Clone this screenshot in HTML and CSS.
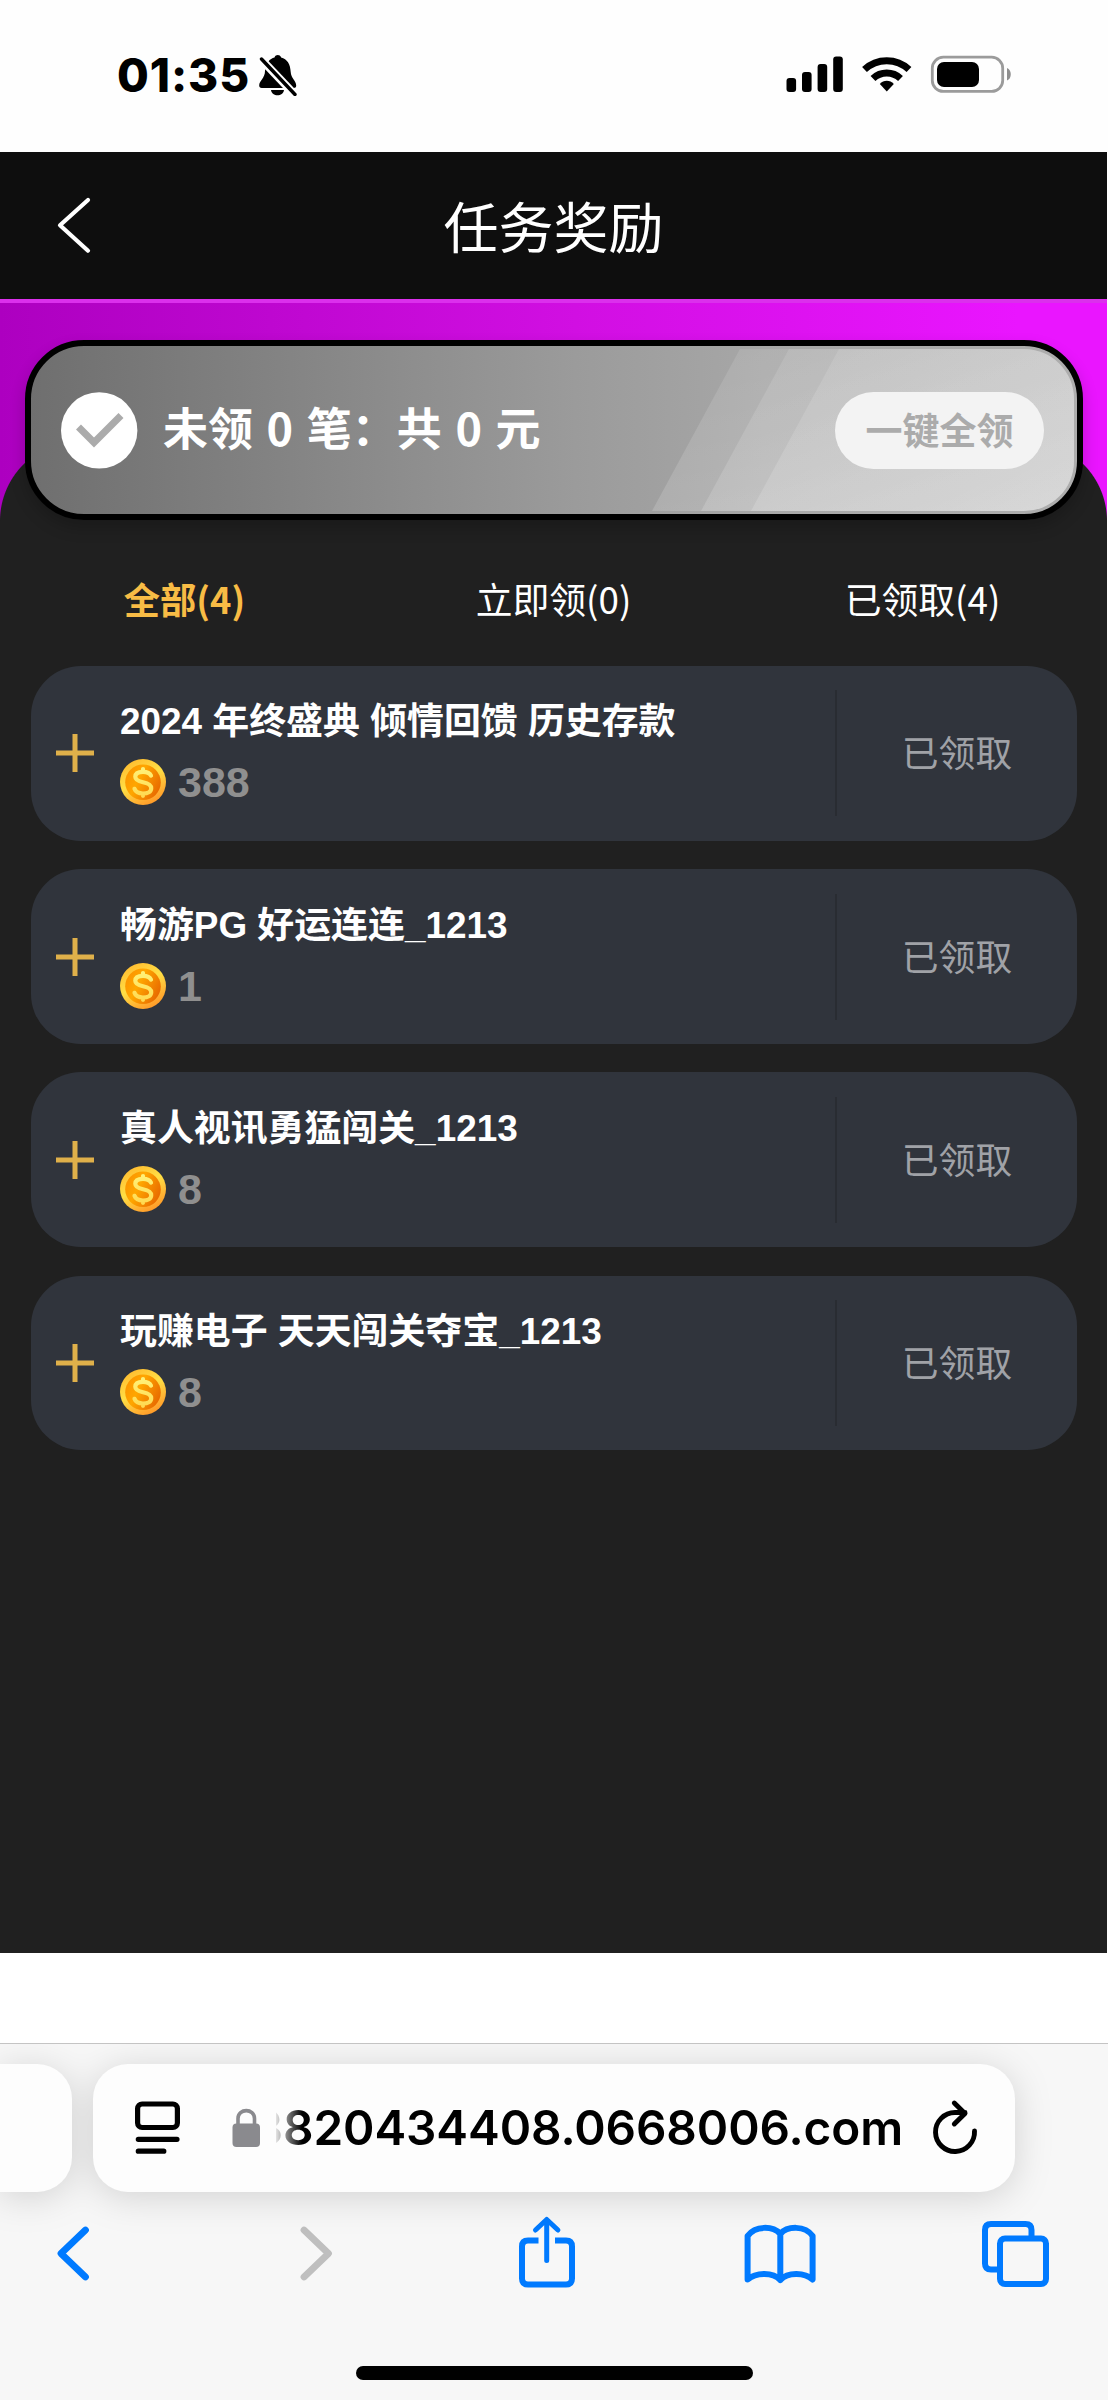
FILE: index.html
```html
<!DOCTYPE html>
<html lang="zh-CN">
<head>
<meta charset="utf-8">
<title>任务奖励</title>
<link rel="stylesheet" href="styles.css">
</head>
<body>
<svg class="defs" width="0" height="0" aria-hidden="true">
  <defs>
    <linearGradient id="rim" x1="0.2" y1="0" x2="0.75" y2="1"><stop offset="0" stop-color="#ffb92e"/><stop offset=".45" stop-color="#ffdf45"/><stop offset="1" stop-color="#ff9426"/></linearGradient>
    <linearGradient id="face" x1="0" y1="0.3" x2="1" y2="0.8"><stop offset="0" stop-color="#fb9500"/><stop offset=".35" stop-color="#ffa600"/><stop offset="1" stop-color="#e56300"/></linearGradient>
    <linearGradient id="sign" gradientUnits="userSpaceOnUse" x1="0" y1="8" x2="0" y2="39"><stop offset="0" stop-color="#fff27a"/><stop offset="1" stop-color="#ffd84f"/></linearGradient>
    <symbol id="coin" viewBox="0 0 46 46">
      <circle cx="23" cy="23" r="23" fill="url(#rim)"/>
      <circle cx="23" cy="23.3" r="17.8" fill="url(#face)"/>
      <path d="M31 16.6C29.6 13.6 26.8 12.8 23 12.8c-4.600 0-7.700 1.700-7.700 5 0 3.600 3.500 4.600 7.700 5.400 4.600.9 8.200 2.100 8.200 6 0 3.500-3.400 5.300-8.200 5.300-4.400 0-7.400-1.500-8.500-4.700M23 10v2M23 35v1.800" fill="none" stroke="url(#sign)" stroke-width="4.200" stroke-linecap="round"/>
    </symbol>
    <symbol id="plus" viewBox="0 0 40 40"><path d="M20 1v38M1 20h38" stroke="#dfb04a" stroke-width="5"/></symbol>
  </defs>
</svg>

<header class="status">
  <span class="clock">01:35</span>
  <svg class="bell" width="40" height="42" viewBox="258 54 40 42">
    <path d="M265 71C265.500 63 270 58.500 274.500 57.500c1.200-3.200 5.400-3.200 6.600 0 6 1.500 9.300 6.500 9.600 14.500.2 6 5.500 9 5.500 13.500 0 1.800-1 2.500-2.500 2.500h-32c-1.700 0-2.500-1-2.500-2.500 0-4.500 5.800-7.500 5.800-14.500z"/>
    <path d="M271 90h13c-.8 7-12.200 7-13 0z"/>
    <path d="M260.500 58.500l36 38" stroke="#fff" stroke-width="8"/>
    <path d="M261.500 59l33.500 35.500" stroke="#000" stroke-width="3.400" stroke-linecap="round"/>
  </svg>
  <svg class="signal" width="57" height="36" viewBox="786 56 57 36">
    <rect x="786.500" y="78" width="9.600" height="14" rx="3"/><rect x="802" y="72" width="9.600" height="20" rx="3"/><rect x="817.600" y="64" width="9.600" height="28" rx="3"/><rect x="833.200" y="56.500" width="9.600" height="35.500" rx="3"/>
  </svg>
  <svg class="wifi" width="50" height="37" viewBox="862 55 50 37">
    <g fill="none" stroke="#000" stroke-width="7"><path d="M864.500 69.500a32.500 32.500 0 0 1 44.500 0"/><path d="M873 78.500a20 20 0 0 1 27.500 0"/></g>
    <path d="M886.800 91.500l-7-7.400c3.800-4.400 10.200-4.400 14 0z"/>
  </svg>
  <svg class="battery" width="82" height="38" viewBox="930 55 82 38">
    <rect x="932.300" y="57.200" width="70.400" height="34.200" rx="11" fill="none" stroke="#9b9b9b" stroke-width="2.800"/>
    <rect x="937" y="62" width="42" height="25" rx="7"/>
    <path d="M1007 68c5 1.500 5 11 0 12.500z" fill="#8e8e8e"/>
  </svg>
</header>

<main class="app">
  <nav class="topbar">
    <svg width="36" height="58" viewBox="56 196 36 58"><path d="M88 200L60 225.200l28 25.500" fill="none" stroke="#fff" stroke-width="4.200" stroke-linecap="round" stroke-linejoin="round"/></svg>
    <h1 class="title">任务奖励</h1>
  </nav>

  <div class="hero">
    <section class="summary">
      <svg class="shine" viewBox="0 0 426 162" aria-hidden="true">
        <defs><linearGradient id="sh" x1="0" y1="0" x2="1" y2="1"><stop offset="0" stop-color="#fff" stop-opacity=".09"/><stop offset="1" stop-color="#fff" stop-opacity=".22"/></linearGradient></defs>
        <g fill="url(#sh)"><path d="M88 0H372a50 50 0 0 1 50 50v62a50 50 0 0 1-50 50H0z"/><path d="M137 0H372a50 50 0 0 1 50 50v62a50 50 0 0 1-50 50H49z"/><path d="M187 0H372a50 50 0 0 1 50 50v62a50 50 0 0 1-50 50H99z"/></g>
      </svg>
      <svg class="check" width="77" height="77" viewBox="61 392 77 77"><circle cx="99.200" cy="430.400" r="38.200" fill="#fff"/><path d="M78.500 427L94 442.500l27-27" fill="none" stroke="#ababab" stroke-width="7"/></svg>
      <span class="summary-text">未领 0 笔：共 0 元</span>
      <button class="claim-all">一键全领</button>
    </section>
  </div>

  <div class="panel">
    <div class="tabs">
      <span class="tab active">全部(4)</span><span class="tab">立即领(0)</span><span class="tab">已领取(4)</span>
    </div>
    <ul class="rewards">
      <li class="reward">
        <svg class="plus" width="40" height="40"><use href="#plus"/></svg>
        <div class="info"><h2>2024 年终盛典 倾情回馈 历史存款</h2><p><svg width="46" height="46"><use href="#coin"/></svg>388</p></div>
        <span class="state">已领取</span>
      </li>
      <li class="reward">
        <svg class="plus" width="40" height="40"><use href="#plus"/></svg>
        <div class="info"><h2>畅游PG 好运连连_1213</h2><p><svg width="46" height="46"><use href="#coin"/></svg>1</p></div>
        <span class="state">已领取</span>
      </li>
      <li class="reward">
        <svg class="plus" width="40" height="40"><use href="#plus"/></svg>
        <div class="info"><h2>真人视讯勇猛闯关_1213</h2><p><svg width="46" height="46"><use href="#coin"/></svg>8</p></div>
        <span class="state">已领取</span>
      </li>
      <li class="reward">
        <svg class="plus" width="40" height="40"><use href="#plus"/></svg>
        <div class="info"><h2>玩赚电子 天天闯关夺宝_1213</h2><p><svg width="46" height="46"><use href="#coin"/></svg>8</p></div>
        <span class="state">已领取</span>
      </li>
    </ul>
  </div>
</main>

<footer class="browser">
  <div class="address-row">
    <div class="prev-tab"></div>
    <div class="address">
      <svg class="reader" width="46" height="56" viewBox="135 2100 46 56"><g fill="none" stroke="#000" stroke-width="5.200" stroke-linecap="round"><rect x="137.600" y="2104" width="39.800" height="23.500" rx="4.500"/><path d="M138.300 2139.300h38.700M138.300 2151.200h25.500"/></g></svg>
      <svg class="lock" width="28" height="40" viewBox="232 2107 28 40"><rect x="232.500" y="2122.500" width="27.500" height="23.500" rx="4" fill="#8a8a8e"/><path d="M238 2124v-6.500c0-10.500 16.500-10.500 16.500 0v6.500" fill="none" stroke="#8a8a8e" stroke-width="3.600"/></svg>
      <span class="url"><span>3820434408.0668006.com</span></span>
      <svg class="reload" width="46" height="58" viewBox="932 2097 46 58"><g fill="none" stroke="#000" stroke-width="4.900" stroke-linecap="round" stroke-linejoin="round"><path d="M974.500 2129a19.500 19.500 0 1 1-19.500-18.500h10M954.300 2101l10.700 10.500-10.700 10.500"/></g></svg>
    </div>
  </div>
  <div class="tools">
    <svg width="80" height="80" viewBox="33 2212 80 80"><path d="M85.500 2230L61 2253.500l24.500 23.500" stroke="#007aff"/></svg>
    <svg width="80" height="80" viewBox="277 2212 80 80"><path d="M304 2230l24.500 23.500L304 2277" stroke="#bfbfbf"/></svg>
    <svg class="thin" width="80" height="80" viewBox="507 2212 80 80"><path d="M538.500 2240.500H528q-6 0-6 6v32q0 6 6 6h38q6 0 6-6v-32q0-6-6-6h-11" stroke-linecap="butt"/><path d="M546.700 2220v40.500M535.500 2230l11.200-10.500 11.200 10.500" stroke-width="5"/></svg>
    <svg class="thin" width="80" height="80" viewBox="740 2212 80 80"><path d="M780.300 2280v-46c-7-8-25-9-32.700 2v43.500c8-7 25-8 32.700.5 7.700-8.500 24.700-7.500 32.300-.5V2236c-7.600-11-25.600-10-32.300-2"/></svg>
    <svg class="thin" width="80" height="80" viewBox="976 2212 80 80"><rect x="1000" y="2238.500" width="46" height="45.500" rx="5"/><path d="M999 2269.500h-8q-6 0-6-6v-33.500q0-6 6-6h34.500q6 0 6 6v7" stroke-linecap="butt"/></svg>
  </div>
  <div class="home-bar"></div>
</footer>
</body>
</html>
```
FILE: styles.css
```css
* { box-sizing: border-box; }
body { margin: 0; width: 1108px; height: 2400px; overflow: hidden; background: #fff; font-family: "Noto Sans CJK SC", sans-serif; }
h1, h2, p, ul { margin: 0; padding: 0; }
svg { display: block; flex: none; }
.defs { position: absolute; }

.status { height: 152px; display: flex; align-items: flex-start; background: #fefefe; }
.clock { width: 141px; margin: 47px 0 0 117px; font: 800 46px/56px Inter, sans-serif; letter-spacing: 0.9px; white-space: nowrap; }
.bell { margin-top: 54px; }
.signal { margin: 56px 0 0 488px; }
.wifi { margin: 55px 0 0 19px; }
.battery { margin: 55px 0 0 18px; }

.app { width: 1107px; height: 1801px; background: #202020; }
.topbar { height: 147px; padding-left: 56px; display: flex; align-items: center; background: #0e0e0e; }
.topbar svg { margin-bottom: 1px; }
.title { flex: 1; padding: 0 92px 4px 0; text-align: center; color: #fff; font-size: 55px; font-weight: 400; line-height: 80px; }

.hero { height: 222px; padding: 37px 24px 0 25px; border-top: 4px solid #db30ec; background: radial-gradient(circle at 80px 218px, #202020 79.500px, transparent 80.500px) 0 0 / 80px 100% no-repeat, radial-gradient(circle at 0 218px, #202020 79.500px, transparent 80.500px) 100% 0 / 80px 100% no-repeat, linear-gradient(#202020, #202020) 80px 138px / 947px 84px no-repeat, linear-gradient(90deg, #ad00c0, #d10fe2 52%, #ea15ff 92%); }
.summary { position: relative; height: 180px; padding: 0 33px 0 30px; display: flex; align-items: center; border: 6px solid #000; border-radius: 59px; background: linear-gradient(90deg, #6f6f6f, #9b9b9b 52%, #a7a7a7 70%, #adadad); box-shadow: 0 8px 16px rgba(0,0,0,.2); }
.shine { position: absolute; right: -1px; top: 3px; width: 426px; height: 162px; }
.check { position: relative; }
.summary-text { position: relative; flex: 1; margin-left: 25px; padding-bottom: 6px; color: #fff; font-size: 45px; font-weight: 700; line-height: 66px; word-spacing: 3.400px; white-space: nowrap; }
.claim-all { position: relative; width: 209px; height: 77px; padding: 0 0 2px; border: 0; border-radius: 39px; background: #f3f3f3; color: #ababab; font: 700 37px/75px "Noto Sans CJK SC", sans-serif; }

.tabs { height: 145px; padding-top: 49px; display: grid; grid-template-columns: repeat(3, 1fr); text-align: center; color: #fff; font-size: 36.800px; line-height: 56px; }
.active { color: #f8bc45; font-weight: 700; font-size: 36.300px; }
.rewards { list-style: none; padding: 0 30px 0 31px; display: grid; gap: 28.400px; }
.reward { height: 174.800px; display: flex; align-items: center; border-radius: 50px; background: #30343c; }
.plus { margin-left: 24px; }
.info { flex: 1; padding-left: 25px; color: #fff; font-family: "Liberation Sans", "Noto Sans CJK SC", sans-serif; }
.info h2 { font-size: 36.900px; font-weight: 700; line-height: 48px; white-space: nowrap; }
.info p { display: flex; align-items: center; gap: 12px; margin-top: 10px; color: #8f8f8f; font-size: 43px; font-weight: 700; line-height: 52px; }
.state { width: 242px; height: 126px; border-left: 2px solid #292c32; text-align: center; color: #a0a2a7; font-size: 36.800px; line-height: 122px; }

.browser { height: 357px; margin-top: 90px; overflow: hidden; border-top: 1px solid #c4c4c4; background: #f7f7f7; }
.address-row { display: flex; gap: 21px; padding-top: 20px; filter: drop-shadow(0 5px 18px rgba(0,0,0,.15)); }
.prev-tab { width: 72px; height: 128px; border-radius: 0 35px 35px 0; background: #fdfdfd; }
.address { width: 922px; height: 128px; padding-left: 42px; display: flex; align-items: center; border-radius: 35px; background: #fdfdfd; }
.lock { margin-left: 51px; }
.url { width: 627px; margin-left: 16px; overflow: hidden; display: flex; justify-content: flex-end; font: 600 47.700px/64px Inter, sans-serif; letter-spacing: -0.1px; white-space: nowrap; -webkit-mask-image: linear-gradient(90deg, rgba(0,0,0,.1), #000 26px); mask-image: linear-gradient(90deg, rgba(0,0,0,.1), #000 26px); }
.reload { margin-left: 29px; }
.tools { height: 80px; margin-top: 20px; padding-left: 33px; display: flex; }
.tools svg { fill: none; stroke: #007aff; stroke-width: 6.800; stroke-linecap: round; stroke-linejoin: round; }
.tools .thin { stroke-width: 6; }
.tools svg:nth-child(1) { margin-right: 164px; }
.tools svg:nth-child(2) { margin-right: 150px; }
.tools svg:nth-child(3) { margin-right: 153px; }
.tools svg:nth-child(4) { margin-right: 156px; }
.home-bar { width: 397px; height: 14px; margin: 74px 0 0 356px; border-radius: 7px; background: #000; }
```
